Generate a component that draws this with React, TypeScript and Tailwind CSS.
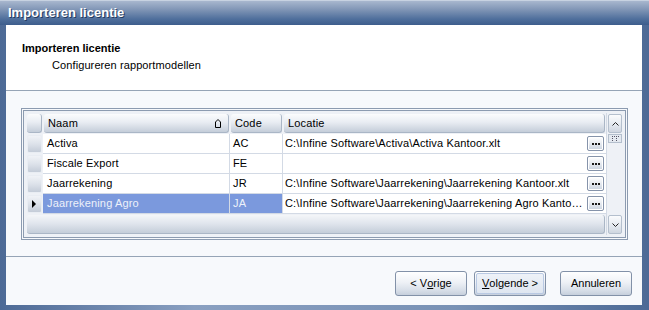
import React from "react";

const font = { fontFamily: '"Liberation Sans", Arial, sans-serif' };

function Ellipsis() {
  return (
    <div className="w-[17px] h-[15px] flex-none rounded-[2px] border border-[#8593aa] bg-[linear-gradient(#ffffff,#e4e9f0_55%,#c9d2de)] flex items-center justify-center gap-[1px] shadow-[inset_0_0_0_1px_#ffffff]">
      <span className="w-[2px] h-[2px] bg-[#1a1a1a]" />
      <span className="w-[2px] h-[2px] bg-[#1a1a1a]" />
      <span className="w-[2px] h-[2px] bg-[#1a1a1a]" />
    </div>
  );
}

function Indicator({ active }: { active?: boolean }) {
  return (
    <div className="w-[17px] h-[20px] p-[1px] flex-none">
      <div className="w-full h-full rounded-[2px] bg-[linear-gradient(#f1f3f7,#dde2ea_50%,#c4ccd8)] border border-[#e9edf3] flex items-center justify-center">
        {active && (
          <svg width="5" height="8" viewBox="0 0 5 8">
            <path d="M0 0 L4 4 L0 8 Z" fill="#000" />
          </svg>
        )}
      </div>
    </div>
  );
}

const rows = [
  { naam: "Activa", code: "AC", loc: "C:\\Infine Software\\Activa\\Activa Kantoor.xlt" },
  { naam: "Fiscale Export", code: "FE", loc: "" },
  { naam: "Jaarrekening", code: "JR", loc: "C:\\Infine Software\\Jaarrekening\\Jaarrekening Kantoor.xlt" },
  { naam: "Jaarrekening Agro", code: "JA", loc: "C:\\Infine Software\\Jaarrekening\\Jaarrekening Agro Kantoor.xlt", sel: true },
];

function HeadCell({ w, children }: { w: string; children?: React.ReactNode }) {
  return (
    <div className={`${w} h-[21px] flex-none p-[1px]`}>
      <div className="w-full h-full rounded-[3px] border-b border-r border-[#aab6c6] bg-[linear-gradient(#fbfcfd,#e9edf3_45%,#d2d9e3_80%,#c4cdd9)] flex items-center px-[4px] text-[11px] tracking-[0.15px] text-black relative">
        {children}
      </div>
    </div>
  );
}

function Btn({ children, focused }: { children: React.ReactNode; focused?: boolean }) {
  return (
    <div className="w-[72px] h-[25px] rounded-[3px] border border-[#8291a8] bg-[linear-gradient(#ffffff,#eef1f6_45%,#d7dee8_80%,#c6cfdc)] p-[1px]">
      <div
        className={`w-full h-full flex items-center justify-center text-[11px] text-black rounded-[2px] ${
          focused ? "border border-[#b9c9e3] bg-[linear-gradient(#eef2f8,#dfe6f0)]" : ""
        }`}
      >
        {children}
      </div>
    </div>
  );
}

export default function App() {
  return (
    <div className="w-[649px] h-[310px] flex flex-col bg-[#5d7aa5] overflow-hidden" style={font}>
      {/* Title bar */}
      <div className="h-[25px] flex-none border-t border-[#c7d2e1] bg-[linear-gradient(#a8b7ce,#8196b6_35%,#4f6f9c_75%,#3d5d8c)] flex items-center pl-[8px]">
        <span className="text-white font-bold text-[13px] [text-shadow:1px_1px_0_#243b60]">Importeren licentie</span>
      </div>
      {/* Window body with borders */}
      <div className="flex-1 flex flex-col pl-[5px] pr-[6px] pb-[5px] bg-[linear-gradient(90deg,#4d6a96,#8aa0c1_30%,#7891b5_70%,#4d6a96)]">
        <div className="flex-1 flex flex-col bg-[#f7f9fc] border-l border-r border-[#4d6b97]">
          {/* Header */}
          <div className="h-[66px] flex-none bg-white border-b border-[#96a4b6] flex flex-col pl-[16px] pt-[16px]">
            <div className="text-[11px] font-bold text-black leading-[14px]">Importeren licentie</div>
            <div className="text-[11px] text-black leading-[14px] pl-[30px] pt-[3px] tracking-[0.1px]">Configureren rapportmodellen</div>
          </div>
          {/* Grid area */}
          <div className="h-[166px] flex-none border-b border-[#96a4b6] pl-[15px] pr-[15px] pt-[17px]">
            <div className="w-[607px] h-[132px] border border-[#8c9bb0] p-[1px] bg-[#f7f9fc]">
              <div className="w-full h-full border border-[#8c9bb0] p-[2px] bg-[#eef1f6] flex">
                {/* table */}
                <div className="flex-1 flex flex-col bg-white">
                  <div className="flex bg-[#eef1f6]">
                    <HeadCell w="w-[17px]" />
                    <HeadCell w="w-[187px]">
                      <span>Naam</span>
                      <svg className="absolute right-[7px] top-[5px]" width="6" height="9" viewBox="0 0 6 9">
                        <path d="M0.5 8.5 V3 L3 0.5 L5.5 3 V8.5 Z" fill="none" stroke="#000" strokeWidth="1" />
                      </svg>
                    </HeadCell>
                    <HeadCell w="w-[53px]">Code</HeadCell>
                    <HeadCell w="w-[323px]">Locatie</HeadCell>
                  </div>
                  {rows.map((r, i) => (
                    <div key={i} className="flex h-[20px] bg-white">
                      <div className="bg-[#eef1f6]">
                        <Indicator active={r.sel} />
                      </div>
                      <div
                        className={`w-[187px] flex-none border-b border-r border-[#d3dae5] flex items-center pl-[4px] text-[11px] tracking-[0.15px] ${
                          r.sel ? "bg-[#7b99dd] text-[#edf1fa]" : "text-black"
                        }`}
                      >
                        {r.naam}
                      </div>
                      <div
                        className={`w-[53px] flex-none border-b border-r border-[#d3dae5] flex items-center pl-[3px] text-[11px] tracking-[0.15px] ${
                          r.sel ? "bg-[#7b99dd] text-[#edf1fa]" : "text-black"
                        }`}
                      >
                        {r.code}
                      </div>
                      <div className="w-[323px] flex-none border-b border-[#d3dae5] flex items-center pl-[2px] pr-[2px] text-[11px] tracking-[0.15px] text-black">
                        <span className="flex-1 min-w-0 whitespace-nowrap overflow-hidden text-ellipsis mr-[3px]">{r.loc}</span>
                        <Ellipsis />
                      </div>
                    </div>
                  ))}
                  <div className="flex-1 bg-[#eef1f6] p-[1px]">
                    <div className="w-full h-full rounded-[3px] border-b border-r border-[#aab6c6] bg-[linear-gradient(#f4f6f9,#dfe4ec_50%,#c4cdd9)]" />
                  </div>
                </div>
                {/* scrollbar */}
                <div className="w-[17px] flex-none flex flex-col bg-[#eef1f6] border-l border-[#d3dae5]">
                  <div className="h-[21px] p-[1px]">
                    <div className="w-full h-full rounded-[2px] border border-[#b4bfcd] bg-[linear-gradient(#fbfcfd,#e2e7ee_60%,#cfd6e0)] flex items-center justify-center">
                      <svg width="7" height="4" viewBox="0 0 7 4">
                        <path d="M0.5 3.5 L3.5 0.5 L6.5 3.5" fill="none" stroke="#222" strokeWidth="1" />
                      </svg>
                    </div>
                  </div>
                  <div className="h-[9px] mx-[1px] border border-[#b4bfcd] bg-[#e4e9f0] flex items-center justify-center">
                    <svg width="7" height="5" viewBox="0 0 7 5">
                      <rect x="0" y="0" width="1" height="1" fill="#556" />
                      <rect x="2" y="0" width="1" height="1" fill="#556" />
                      <rect x="4" y="0" width="1" height="1" fill="#556" />
                      <rect x="6" y="0" width="1" height="1" fill="#556" />
                      <rect x="0" y="2" width="1" height="1" fill="#556" />
                      <rect x="4" y="2" width="1" height="1" fill="#556" />
                      <rect x="0" y="4" width="1" height="1" fill="#556" />
                      <rect x="4" y="4" width="1" height="1" fill="#556" />
                    </svg>
                  </div>
                  <div className="flex-1" />
                  <div className="h-[21px] p-[1px]">
                    <div className="w-full h-full rounded-[2px] border border-[#b4bfcd] bg-[linear-gradient(#fbfcfd,#e2e7ee_60%,#cfd6e0)] flex items-center justify-center">
                      <svg width="7" height="4" viewBox="0 0 7 4">
                        <path d="M0.5 0.5 L3.5 3.5 L6.5 0.5" fill="none" stroke="#222" strokeWidth="1" />
                      </svg>
                    </div>
                  </div>
                </div>
              </div>
            </div>
          </div>
          {/* Buttons */}
          <div className="flex-1 flex items-start justify-end pt-[14px] pr-[10px]">
            <Btn>
              &lt; V<span className="underline">o</span>rige
            </Btn>
            <div className="w-[7px]" />
            <Btn focused>
              <span className="underline">V</span>olgende &gt;
            </Btn>
            <div className="w-[14px]" />
            <Btn>Annuleren</Btn>
          </div>
        </div>
      </div>
    </div>
  );
}
